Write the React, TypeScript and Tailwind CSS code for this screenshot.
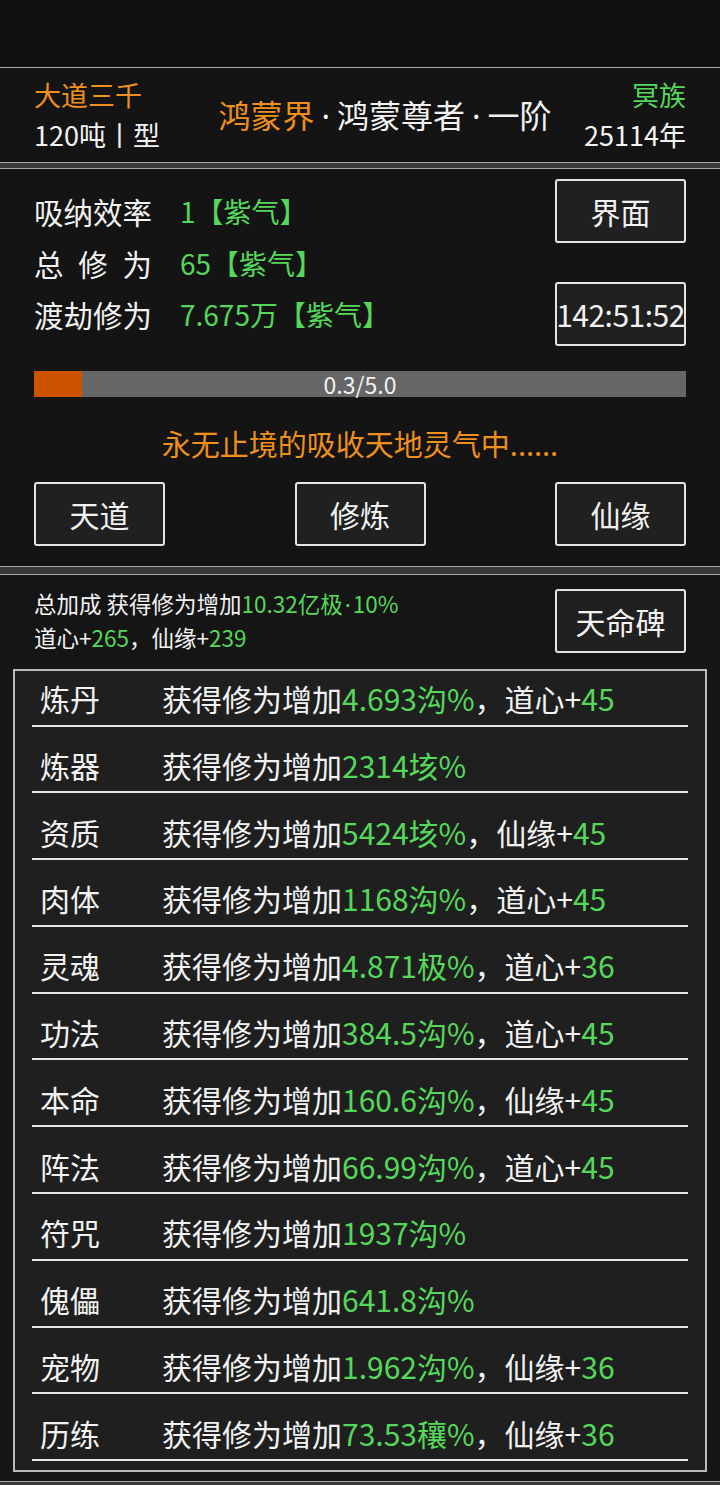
const green = "text-[#55d85a]";

const rows: [string, string, string?, string?][] = [
  ["炼丹", "4.693沟%", "道心", "45"],
  ["炼器", "2314垓%"],
  ["资质", "5424垓%", "仙缘", "45"],
  ["肉体", "1168沟%", "道心", "45"],
  ["灵魂", "4.871极%", "道心", "36"],
  ["功法", "384.5沟%", "道心", "45"],
  ["本命", "160.6沟%", "仙缘", "45"],
  ["阵法", "66.99沟%", "道心", "45"],
  ["符咒", "1937沟%"],
  ["傀儡", "641.8沟%"],
  ["宠物", "1.962沟%", "仙缘", "36"],
  ["历练", "73.53穰%", "仙缘", "36"],
];

function Btn({ children, cls = "" }: { children: React.ReactNode; cls?: string }) {
  return (
    <div
      className={
        "flex h-[64px] w-[131px] items-center justify-center rounded-[3px] border-2 border-[#e4e4e4] bg-[#202020] text-[30px] text-[#f2f2f2] " +
        cls
      }
    >
      {children}
    </div>
  );
}

// narrow latin middle dot
function Dot() {
  return <span className="font-['Noto_Sans'] px-[7px]">·</span>;
}

export default function App() {
  return (
    <div
      className="flex h-[1485px] w-[720px] flex-col bg-[#3a3a3a] text-[#f2f2f2]"
      style={{ fontFamily: '"Noto Sans CJK SC", "Noto Sans", sans-serif' }}
    >
      <div className="h-[67px] bg-[#111111]" />

      {/* header */}
      <div className="flex h-[96px] items-center justify-between border-y border-[#a8a8a8] bg-[#141414] px-[34px]">
        <div className="flex flex-col text-[27px] leading-[40px]">
          <span className="text-[#f0901c]">大道三千</span>
          <span>120吨丨型</span>
        </div>
        <div className="ml-[26px] text-[32px] leading-[40px]">
          <span className="text-[#f0901c]">鸿蒙界</span>
          <Dot />
          鸿蒙尊者
          <Dot />
          一阶
        </div>
        <div className="flex flex-col items-end text-[27px] leading-[40px]">
          <span className={green}>冥族</span>
          <span>25114年</span>
        </div>
      </div>

      <div className="h-[5px]" />

      {/* cultivation */}
      <div className="flex h-[399px] flex-col border-y border-[#a8a8a8] bg-[#141414] px-[34px]">
        <div className="flex justify-between">
          <div className="mt-[17px] flex flex-col leading-[51.5px]">
            <div className="flex">
              <span className="w-[146px] text-[29.5px]">吸纳效率</span>
              <span className={"text-[28px] " + green}>1【紫气】</span>
            </div>
            <div className="flex">
              <span className="flex w-[118px] justify-between text-[29.5px]">
                <span>总</span>
                <span>修</span>
                <span>为</span>
              </span>
              <span className={"ml-[28px] text-[28px] " + green}>65【紫气】</span>
            </div>
            <div className="flex">
              <span className="w-[146px] text-[29.5px]">渡劫修为</span>
              <span className={"text-[28px] " + green}>7.675万【紫气】</span>
            </div>
          </div>
          <div className="mt-[10px] flex flex-col gap-[39px]">
            <Btn>界面</Btn>
            <Btn cls="text-[28px] tracking-[-0.5px]">142:51:52</Btn>
          </div>
        </div>

        <div className="relative mt-[25px] h-[26px] bg-[#666666]">
          <div className="absolute left-0 top-0 h-full w-[48px] bg-[#cc5200]" />
          <div className="relative text-center text-[23px] leading-[26px]">0.3/5.0</div>
        </div>

        <div className="mt-[26px] text-center text-[29px] leading-[40px] text-[#f0901c]">
          永无止境的吸收天地灵气中......
        </div>

        <div className="mt-[19px] flex justify-between">
          <Btn>天道</Btn>
          <Btn>修炼</Btn>
          <Btn>仙缘</Btn>
        </div>
      </div>

      <div className="h-[7px]" />

      {/* bonuses */}
      <div className="flex h-[908px] flex-col border-y border-[#a8a8a8] bg-[#151515]">
        <div className="flex justify-between px-[34px] pt-[14px]">
          <div className="-mt-[2px] flex flex-col text-[22.5px] leading-[33px]">
            <div>
              总加成 获得修为增加
              <span className={green}>
                10.32亿极
                <span className="font-['Noto_Sans'] px-[2px]">·</span>
                10%
              </span>
            </div>
            <div>
              道心+<span className={green}>265</span>，仙缘+<span className={green}>239</span>
            </div>
          </div>
          <Btn>天命碑</Btn>
        </div>

        <div className="mx-[13px] mt-[15px] border-2 border-[#b8b8b8] bg-[#1f1f1f] px-[17px] pb-[9px]">
          {rows.map(([name, val, attr, num], i) => (
            <div
              key={name}
              className={
                "flex border-b-2 border-[#e6e6e6] pb-[11.5px] pl-[8px] text-[30px] leading-[30px] " +
                (i === 0 ? "pt-[12px]" : "pt-[23.3px]")
              }
            >
              <span className="w-[122px]">{name}</span>
              <span>
                获得修为增加<span className={green}>{val}</span>
                {attr && (
                  <>
                    ，{attr}+<span className={green}>{num}</span>
                  </>
                )}
              </span>
            </div>
          ))}
        </div>
      </div>
    </div>
  );
}
